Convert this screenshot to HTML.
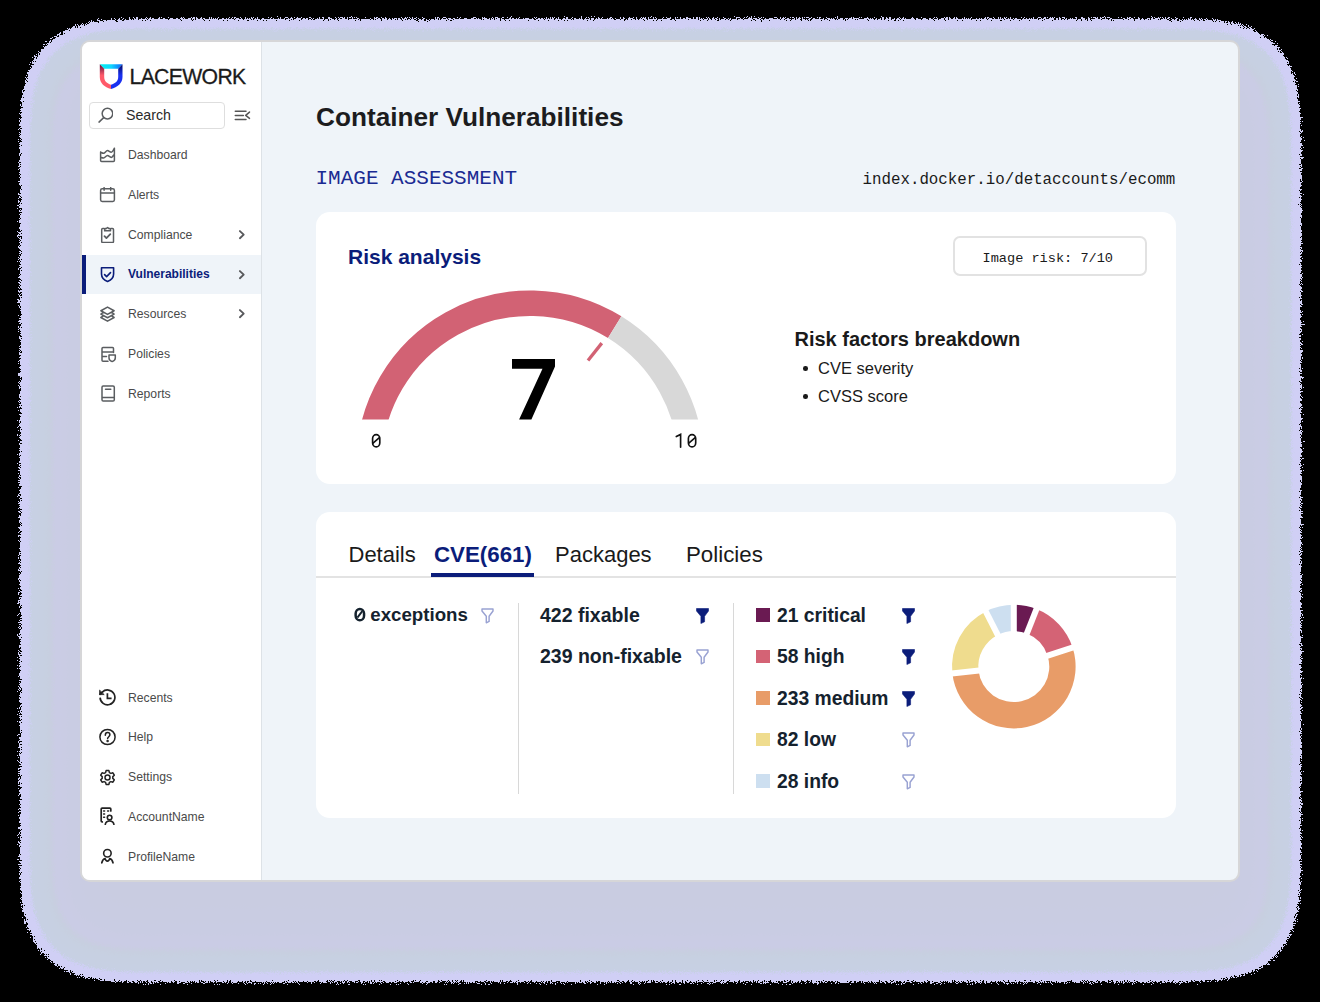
<!DOCTYPE html>
<html><head><meta charset="utf-8">
<style>
*{margin:0;padding:0;box-sizing:border-box}
html,body{width:1320px;height:1002px;overflow:hidden;background:#000;font-family:"Liberation Sans",sans-serif;-webkit-font-smoothing:antialiased}
div,span,svg{position:absolute}
#glow{left:18px;top:18px;width:1284px;height:964px;border-radius:78px;background:#c8c9de;box-shadow:inset 0 0 18px 8px #d3d0f6}
#win{left:80px;top:40px;width:1160px;height:842px;border:2px solid #d6d6d8;border-radius:10px;background:#eff4f9;overflow:hidden}
#side{left:82px;top:42px;width:180px;height:838px;background:#fff;border-right:1px solid #dde2e7;border-bottom-left-radius:8px;border-top-left-radius:8px}
.t{white-space:pre;line-height:1}
.nt{left:128px;font-size:12.2px;color:#4a4a4a;white-space:pre;line-height:40px;height:40px}
.ic{left:99px;fill:none;stroke:#5a5d60;stroke-width:1.5;stroke-linecap:round;stroke-linejoin:round}
.ic2{left:99px;fill:none;stroke:#222;stroke-width:1.5;stroke-linecap:round;stroke-linejoin:round}
.chev{left:237px;fill:none;stroke:#58595c;stroke-width:1.9;stroke-linecap:round;stroke-linejoin:round}
.mono{font-family:"Liberation Mono",monospace}
.card{left:316px;width:860px;background:#fff;border-radius:14px}
</style></head><body>
<svg id="glowsvg" style="left:0;top:0" width="1320" height="1002" viewBox="0 0 1320 1002">
<filter id="gf" filterUnits="userSpaceOnUse" x="0" y="0" width="1320" height="1002" color-interpolation-filters="sRGB">
<feGaussianBlur in="SourceGraphic" stdDeviation="40" result="b"/>
<feTurbulence type="fractalNoise" baseFrequency="1.7" numOctaves="1" seed="7" result="n"/>
<feComposite in="b" in2="n" operator="arithmetic" k1="0" k2="1" k3="0.09" k4="-0.045"/>
<feColorMatrix type="matrix" values="0 0 0 1 0  0 0 0 1 0  0 0 0 1 0  0 0 0 1 0"/>
<feComponentTransfer><feFuncR type="table" tableValues="0.8157 0.8157 0.8157 0.8157 0.8157 0.8157 0.8157 0.8157 0.8157 0.8157 0.8157 0.8157 0.8157 0.8157 0.8157 0.8157 0.8157 0.8157 0.8157 0.8157 0.8157 0.8157 0.8157 0.8157 0.8157 0.8157 0.8157 0.8157 0.8157 0.8157 0.8157 0.8157 0.8157 0.8157 0.8157 0.8157 0.8157 0.8157 0.8157 0.8157 0.8157 0.8157 0.8157 0.8157 0.8157 0.8157 0.8157 0.8157 0.8157 0.8157 0.8157 0.8157 0.8157 0.8157 0.8157 0.8157 0.8157 0.8157 0.8157 0.8157 0.8157 0.8157 0.8157 0.8157 0.8157 0.8157 0.8157 0.8157 0.8157 0.8157 0.8098 0.8039 0.7980 0.7922 0.7863 0.7804 0.7804 0.7804 0.7804 0.7804 0.7804 0.7804 0.7804 0.7804 0.7804 0.7804 0.7804 0.7804 0.7804 0.7804 0.7804 0.7804 0.7804 0.7804 0.7804 0.7804 0.7804 0.7804 0.7804 0.7804 0.7804 0.7807 0.7810 0.7814 0.7817 0.7820 0.7824 0.7827 0.7830 0.7833 0.7837 0.7840 0.7843 0.7853 0.7863 0.7873 0.7882 0.7892 0.7902 0.7912 0.7922 0.7931 0.7941 0.7951 0.7961 0.7959 0.7957 0.7955 0.7953 0.7951 0.7949 0.7947 0.7945 0.7943 0.7941 0.7939 0.7937 0.7935 0.7933 0.7931 0.7929 0.7927 0.7925 0.7924 0.7922 0.7921 0.7920 0.7919 0.7919 0.7918 0.7917 0.7917 0.7916 0.7915 0.7915 0.7914 0.7913 0.7912 0.7912 0.7911 0.7910 0.7910 0.7909 0.7908 0.7908 0.7907 0.7906 0.7905 0.7905 0.7904 0.7903 0.7903 0.7902 0.7901 0.7901 0.7900 0.7899 0.7898 0.7898 0.7897 0.7896 0.7896 0.7895 0.7894 0.7894 0.7893 0.7892 0.7891 0.7891 0.7890 0.7889 0.7889 0.7888 0.7887 0.7887 0.7886 0.7885 0.7884 0.7884 0.7883 0.7882"/><feFuncG type="table" tableValues="0.8118 0.8118 0.8118 0.8118 0.8118 0.8118 0.8118 0.8118 0.8118 0.8118 0.8118 0.8118 0.8118 0.8118 0.8118 0.8118 0.8118 0.8118 0.8118 0.8118 0.8118 0.8118 0.8118 0.8118 0.8118 0.8118 0.8118 0.8118 0.8118 0.8118 0.8118 0.8118 0.8118 0.8118 0.8118 0.8118 0.8118 0.8118 0.8118 0.8118 0.8118 0.8118 0.8118 0.8118 0.8118 0.8118 0.8118 0.8118 0.8118 0.8118 0.8118 0.8118 0.8118 0.8118 0.8118 0.8118 0.8118 0.8118 0.8118 0.8118 0.8118 0.8118 0.8118 0.8118 0.8118 0.8118 0.8118 0.8118 0.8118 0.8118 0.8131 0.8144 0.8157 0.8170 0.8183 0.8196 0.8196 0.8196 0.8196 0.8196 0.8196 0.8196 0.8196 0.8196 0.8196 0.8196 0.8196 0.8196 0.8196 0.8196 0.8196 0.8196 0.8196 0.8196 0.8196 0.8196 0.8196 0.8196 0.8196 0.8196 0.8196 0.8190 0.8183 0.8176 0.8170 0.8163 0.8157 0.8150 0.8144 0.8137 0.8131 0.8124 0.8118 0.8108 0.8098 0.8088 0.8078 0.8069 0.8059 0.8049 0.8039 0.8029 0.8020 0.8010 0.8000 0.8000 0.8000 0.8000 0.8000 0.8000 0.8000 0.8000 0.8000 0.8000 0.8000 0.8000 0.8000 0.8000 0.8000 0.8000 0.8000 0.8000 0.8000 0.8000 0.8000 0.8000 0.8000 0.8000 0.8000 0.8000 0.8000 0.8000 0.8000 0.8000 0.8000 0.8000 0.8000 0.8000 0.8000 0.8000 0.8000 0.8000 0.8000 0.8000 0.8000 0.8000 0.8000 0.8000 0.8000 0.8000 0.8000 0.8000 0.8000 0.8000 0.8000 0.8000 0.8000 0.8000 0.8000 0.8000 0.8000 0.8000 0.8000 0.8000 0.8000 0.8000 0.8000 0.8000 0.8000 0.8000 0.8000 0.8000 0.8000 0.8000 0.8000 0.8000 0.8000 0.8000 0.8000 0.8000 0.8000"/><feFuncB type="table" tableValues="0.9647 0.9647 0.9647 0.9647 0.9647 0.9647 0.9647 0.9647 0.9647 0.9647 0.9647 0.9647 0.9647 0.9647 0.9647 0.9647 0.9647 0.9647 0.9647 0.9647 0.9647 0.9647 0.9647 0.9647 0.9647 0.9647 0.9647 0.9647 0.9647 0.9647 0.9647 0.9647 0.9647 0.9647 0.9647 0.9647 0.9647 0.9647 0.9647 0.9647 0.9647 0.9647 0.9647 0.9647 0.9647 0.9647 0.9647 0.9647 0.9647 0.9647 0.9647 0.9647 0.9647 0.9647 0.9647 0.9647 0.9647 0.9647 0.9647 0.9647 0.9647 0.9647 0.9647 0.9647 0.9647 0.9647 0.9647 0.9647 0.9647 0.9647 0.9529 0.9412 0.9294 0.9176 0.9059 0.8941 0.8938 0.8935 0.8932 0.8929 0.8925 0.8922 0.8919 0.8916 0.8913 0.8910 0.8907 0.8904 0.8900 0.8897 0.8894 0.8891 0.8888 0.8885 0.8882 0.8878 0.8875 0.8872 0.8869 0.8866 0.8863 0.8856 0.8850 0.8843 0.8837 0.8830 0.8824 0.8817 0.8810 0.8804 0.8797 0.8791 0.8784 0.8804 0.8824 0.8843 0.8863 0.8882 0.8902 0.8922 0.8941 0.8961 0.8980 0.9000 0.9020 0.9016 0.9012 0.9008 0.9004 0.9000 0.8996 0.8992 0.8988 0.8984 0.8980 0.8976 0.8973 0.8969 0.8965 0.8961 0.8957 0.8953 0.8949 0.8945 0.8941 0.8939 0.8937 0.8935 0.8933 0.8931 0.8929 0.8926 0.8924 0.8922 0.8920 0.8918 0.8916 0.8914 0.8912 0.8910 0.8908 0.8905 0.8903 0.8901 0.8899 0.8897 0.8895 0.8893 0.8891 0.8889 0.8887 0.8884 0.8882 0.8880 0.8878 0.8876 0.8874 0.8872 0.8870 0.8868 0.8866 0.8863 0.8861 0.8859 0.8857 0.8855 0.8853 0.8851 0.8849 0.8847 0.8845 0.8842 0.8840 0.8838 0.8836 0.8834 0.8832 0.8830 0.8828 0.8826 0.8824"/><feFuncA type="discrete" tableValues="0 0 0 0 0 0 0 0 0 0 0 0 0 0 0 0 0 0 0 0 0 0 0 0 0 0 0 1 1 1 1 1 1 1 1 1 1 1 1 1 1 1 1 1 1 1 1 1 1 1 1 1 1 1 1 1 1 1 1 1 1 1 1 1 1 1 1 1 1 1 1 1 1 1 1 1 1 1 1 1 1 1 1 1 1 1 1 1 1 1 1 1 1 1 1 1 1 1 1 1"/></feComponentTransfer>
</filter>
<rect x="44" y="43" width="1233" height="915" fill="#fff" filter="url(#gf)"/>
</svg>
<div id="win"></div>
<div id="side"></div>

<!-- logo -->
<svg style="left:99px;top:63px" width="25" height="27" viewBox="0 0 25 27">
  <defs>
    <linearGradient id="lgTop" x1="0" x2="1" y1="0" y2="0"><stop offset="0" stop-color="#00f0f0"/><stop offset="0.5" stop-color="#10d8ff"/><stop offset="1" stop-color="#1060ff"/></linearGradient>
    <linearGradient id="lgL" x1="0" x2="0" y1="0" y2="1"><stop offset="0" stop-color="#5a1040"/><stop offset="0.45" stop-color="#ff5a6a"/><stop offset="1" stop-color="#ff5a6a"/></linearGradient>
    <linearGradient id="lgR" x1="0" x2="0" y1="0" y2="1"><stop offset="0" stop-color="#000a60"/><stop offset="0.45" stop-color="#1a30f0"/><stop offset="1" stop-color="#1a30f0"/></linearGradient>
  </defs>
  <path d="M0.8 1.2 L23.5 1.2 L19.2 5.8 L5.2 5.8 Z" fill="url(#lgTop)"/>
  <path d="M0.8 1.2 L5.2 5.8 L5.2 14 C5.2 18 8 20.5 12 21.8 L12 25.9 C5.5 24.5 0.8 20 0.8 14 Z" fill="url(#lgL)"/>
  <path d="M23.5 1.2 L19.2 5.8 L19.2 14 C19.2 18 16.2 20.5 12 21.8 L12 25.9 C18.5 24.5 23.5 20 23.5 14 Z" fill="url(#lgR)"/>
</svg>
<span class="t" style="left:129.5px;top:66.1px;font-size:21.2px;color:#1b1b1b;letter-spacing:-0.65px;-webkit-text-stroke:0.3px #1b1b1b">LACEWORK</span>

<!-- search -->
<div style="left:88.7px;top:102px;width:136.3px;height:27px;border:1px solid #dedede;border-radius:4px;background:#fff"></div>
<svg class="ic" style="left:97px;top:106px" width="16" height="18" viewBox="0 0 16 18"><circle cx="10.45" cy="7.6" r="5.3"/><path d="M6.4 11.9 L2 16.1"/></svg>
<span class="t" style="left:126px;top:107.5px;font-size:14.2px;color:#2a2a2a">Search</span>
<svg class="ic" style="left:233px;top:108px;stroke:#555" width="20" height="14" viewBox="0 0 20 14"><path d="M2.3 3.2 H13 M2.3 7.4 H10.4 M2.3 11.6 H13 M16.5 4.1 L12.7 7.4 L16.5 10.4"/></svg>

<!-- nav -->
<svg class="ic" style="top:147px;stroke:#5a5d60;stroke-width:1.5" width="17" height="17" viewBox="0 0 17 17"><path d="M1.6 5.1 V13.6 Q1.6 14.6 2.6 14.6 H14.4 Q15.4 14.6 15.4 13.6 V1.2 M1.6 5.1 C2.6 5.6 3.5 6.3 4.6 6.3 C6 6.3 7 3.6 8.5 3.6 C9.8 3.6 10.8 5.3 12.3 5.3 C13.5 5.3 14.6 2.5 15.4 1.2 M1.6 10.3 C2.6 10.6 3.5 11 4.6 11 C6 11 7 8.5 8.5 8.5 C9.8 8.5 10.8 10.4 12.2 10.4 C13.4 10.4 14.5 8 15.4 7.3"/></svg>
<span class="nt" style="top:135px">Dashboard</span>

<svg class="ic" style="top:187px" width="17" height="17" viewBox="0 0 17 17"><rect x="1.6" y="1.8" width="13.8" height="12.6" rx="1.6"/><path d="M1.6 6.1 H15.4 M5.1 0.6 V3.2 M11.7 0.6 V3.2"/></svg>
<span class="nt" style="top:175px">Alerts</span>

<svg class="ic" style="top:226px" width="17" height="17" viewBox="0 0 17 17"><path d="M5 2.6 H3.7 Q2.7 2.6 2.7 3.6 V15.6 Q2.7 16.6 3.7 16.6 H13.5 Q14.5 16.6 14.5 15.6 V3.6 Q14.5 2.6 13.5 2.6 H12.2 M5.6 4.8 H11.6 L11.2 2.6 H9.7 Q8.6 0.4 7.5 2.6 H6 Z"/><path d="M5.5 10.2 L7.4 12.1 L11.3 8.2" stroke-width="1.8"/></svg>
<span class="nt" style="top:214.7px">Compliance</span>
<svg class="chev" style="top:229px" width="10" height="12" viewBox="0 0 10 12"><path d="M2.9 2.1 L6.7 5.6 L2.9 9.2"/></svg>

<div style="left:82px;top:254.5px;width:179px;height:39.5px;background:#eff4f9"></div>
<div style="left:82px;top:254.5px;width:4px;height:39.5px;background:#0b1d7a"></div>
<svg class="ic" style="top:266px;stroke:#0b1d7a;stroke-width:1.6" width="17" height="17" viewBox="0 0 17 17"><path d="M2.5 1.8 H14.6 V8 C14.6 12 11.5 14.3 8.55 15.5 C5.6 14.3 2.5 12 2.5 8 Z M5.6 8.6 L7.6 10.6 L11.5 6.6"/></svg>
<span class="nt" style="top:254.2px;color:#0b1d7a;font-weight:bold;font-size:12px">Vulnerabilities</span>
<svg class="chev" style="top:268.5px" width="10" height="12" viewBox="0 0 10 12"><path d="M2.9 2.1 L6.7 5.6 L2.9 9.2"/></svg>

<svg class="ic" style="top:305.5px;stroke-width:1.55" width="17" height="17" viewBox="0 0 17 17"><path d="M8.5 1.1 L15.1 4.7 L8.5 8.4 L1.9 4.7 Z M3.6 6.9 L1.9 8.1 L8.5 11.7 L15.1 8.1 L13.4 6.9 M3.6 10.3 L1.9 11.5 L8.5 15.1 L15.1 11.5 L13.4 10.3"/></svg>
<span class="nt" style="top:293.8px">Resources</span>
<svg class="chev" style="top:308px" width="10" height="12" viewBox="0 0 10 12"><path d="M2.9 2.1 L6.7 5.6 L2.9 9.2"/></svg>

<svg class="ic" style="top:345.5px;left:99.6px" width="17" height="17" viewBox="0 0 17 17"><path d="M8 15.2 H3 Q2 15.2 2 14.2 V2.5 Q2 1.5 3 1.5 H12.5 Q13.5 1.5 13.5 2.5 V6.5 M2 6 H13.5 M2 10.5 H6.5 M9 9 H15.3 V12 C15.3 13.8 13.8 15 12.15 15.6 C10.5 15 9 13.8 9 12 Z"/></svg>
<span class="nt" style="top:333.7px">Policies</span>

<svg class="ic" style="top:385px;left:99.6px" width="17" height="17" viewBox="0 0 17 17"><path d="M3.2 1 H13 Q14.3 1 14.3 2.3 V14.7 Q14.3 16 13 16 H3.2 Q2 16 2 14.7 V2.3 Q2 1 3.2 1 Z M2 12.5 H14.3 M5.5 4.3 H10.8"/></svg>
<span class="nt" style="top:373.5px">Reports</span>

<!-- bottom nav -->
<svg class="ic2" style="top:688px" width="18" height="18" viewBox="0 0 18 18"><path d="M1.1 9.6 A7.4 7.4 0 1 0 3.3 4.1" stroke-width="1.7" stroke-linecap="butt"/><path d="M0.6 2.5 L0.6 6.6 L4.8 6.6 Z" fill="#222" stroke-width="0.8"/><path d="M0.9 6.3 L3.3 4.1" stroke-width="1.7"/><path d="M8.4 5.3 V10.3 H12.6" stroke-width="1.7" stroke-linecap="butt" stroke-linejoin="miter"/></svg>
<span class="nt" style="top:677.5px">Recents</span>

<svg class="ic2" style="top:728px" width="18" height="18" viewBox="0 0 18 18"><circle cx="8.5" cy="9" r="7.6"/><path d="M6.3 7.2 C6.3 5.4 7.5 4.6 8.6 4.6 C9.9 4.6 10.9 5.5 10.9 6.8 C10.9 8.6 8.6 8.8 8.6 10.6"/><circle cx="8.6" cy="13.1" r="0.5" fill="#222"/></svg>
<span class="nt" style="top:717px">Help</span>

<svg class="ic2" style="top:768.5px" width="18" height="18" viewBox="0 0 18 18"><path d="M7.1 1.6 H9.9 L10.4 3.6 L11.9 4.4 L13.9 3.8 L15.3 6.2 L13.8 7.6 V9.4 L15.3 10.8 L13.9 13.2 L11.9 12.6 L10.4 13.4 L9.9 15.4 H7.1 L6.6 13.4 L5.1 12.6 L3.1 13.2 L1.7 10.8 L3.2 9.4 V7.6 L1.7 6.2 L3.1 3.8 L5.1 4.4 L6.6 3.6 Z"/><circle cx="8.5" cy="8.5" r="2.5"/></svg>
<span class="nt" style="top:757px">Settings</span>

<svg class="ic2" style="top:806px" width="18" height="19" viewBox="0 0 18 19"><path d="M3.3 15.9 H3.1 Q2.2 15.9 2.2 15 V3 Q2.2 2.2 3.1 2.2 H10.9 Q11.8 2.2 11.8 3 V5" stroke-width="1.7"/><path d="M4.6 4.9 H5.6 M8.6 4.9 H9.6 M4.6 8.1 H5.6 M4.6 11.3 H5.6" stroke-width="1.5"/><circle cx="10.6" cy="11.6" r="2.3" stroke-width="1.6"/><path d="M6.3 18.3 C6.7 16.1 8.3 15 10.6 15 C12.9 15 14.5 16.1 14.9 18.3" stroke-width="1.7"/></svg>
<span class="nt" style="top:796.8px">AccountName</span>

<svg class="ic2" style="top:846px" width="18" height="19" viewBox="0 0 18 19"><circle cx="8.4" cy="7.2" r="3.75" stroke-width="1.6"/><path d="M2.8 16.8 C3.4 14.2 4.6 12.8 6 12.6 C6.6 14.6 7.5 15.1 8.4 15.1 C9.3 15.1 10.2 14.6 10.8 12.6 C12.2 12.8 13.4 14.2 14 16.8" stroke-width="1.7"/></svg>
<span class="nt" style="top:836.6px">ProfileName</span>


<!-- main header -->
<span class="t" style="left:316px;top:104px;font-size:26.2px;font-weight:bold;color:#1c1c1e">Container Vulnerabilities</span>
<span class="t mono" style="left:315.5px;top:168px;font-size:21px;color:#1a2a92">IMAGE ASSESSMENT</span>
<span class="t mono" style="left:862.5px;top:173px;font-size:15.8px;color:#1a1a1a">index.docker.io/detaccounts/ecomm</span>

<!-- card 1 -->
<div class="card" style="top:212px;height:271.5px"></div>
<span class="t" style="left:348px;top:246px;font-size:21px;font-weight:bold;color:#0b1d7a">Risk analysis</span>
<div style="left:952.5px;top:236px;width:194px;height:39.5px;border:2px solid #e2e2e2;border-radius:7px"></div>
<span class="t mono" style="left:982.5px;top:252px;font-size:13.6px;color:#1a1a1a">Image risk: 7/10</span>

<svg style="left:316px;top:212px" width="420" height="260" viewBox="316 212 420 260">
  <defs><clipPath id="gclip"><rect x="316" y="212" width="420" height="207.5"/></clipPath></defs>
  <g clip-path="url(#gclip)" fill="none" stroke-width="25.5">
    <path d="M 369.1 464.2 A 161 161 0 0 1 614.7 327.2" stroke="#d26274"/>
    <path d="M 614.7 327.2 A 161 161 0 0 1 691.1 464.2" stroke="#d8d8d8"/>
  </g>
  <line x1="588" y1="360.5" x2="601.8" y2="343.1" stroke="#d26274" stroke-width="3.3"/>
</svg>
<svg style="left:500px;top:350px" width="70" height="75" viewBox="500 350 70 75"><polygon points="512,359.1 555,359.1 555,366.4 531.4,419.6 519.1,419.6 542.5,368.8 512,368.8" fill="#000"/></svg>
<svg style="left:360px;top:425px" width="350" height="30" viewBox="360 425 350 30" fill="none" stroke="#111" stroke-width="1.65" stroke-linecap="round"><rect x="372.6" y="434.6" width="7.2" height="12.3" rx="3.6" ry="3.9"/><path d="M373 443.2 L379.4 437.7"/><rect x="688.4" y="434.6" width="7.3" height="12.3" rx="3.6" ry="3.9"/><path d="M688.8 443.2 L695.2 437.7"/><path d="M676.3 436.6 L680.6 434.4 V447.2"/></svg>


<span class="t" style="left:794.5px;top:328.5px;font-size:20px;font-weight:bold;color:#1a1a1a">Risk factors breakdown</span>
<div style="left:803.3px;top:366.3px;width:4.6px;height:4.6px;border-radius:50%;background:#1a1a1a"></div>
<span class="t" style="left:818px;top:360px;font-size:16.5px;color:#1a1a1a">CVE severity</span>
<div style="left:803.3px;top:394.3px;width:4.6px;height:4.6px;border-radius:50%;background:#1a1a1a"></div>
<span class="t" style="left:818px;top:388px;font-size:16.5px;color:#1a1a1a">CVSS score</span>

<!-- card 2 -->
<div class="card" style="top:512px;height:306px"></div>
<span class="t" style="left:348.5px;top:544px;font-size:22px;color:#1a1a1a">Details</span>
<span class="t" style="left:434px;top:544px;font-size:22.3px;font-weight:bold;color:#0b1d7a">CVE(661)</span>
<span class="t" style="left:555px;top:544px;font-size:22px;color:#1a1a1a">Packages</span>
<span class="t" style="left:686px;top:544px;font-size:22.3px;color:#1a1a1a">Policies</span>
<div style="left:316px;top:576px;width:860px;height:1.5px;background:#e3e3e3"></div>
<div style="left:430.5px;top:573px;width:103px;height:4px;background:#0b1d7a"></div>

<svg style="left:352px;top:605px" width="16" height="19" viewBox="0 0 16 19" fill="none" stroke="#15222e" stroke-width="2.5"><rect x="3.65" y="3.95" width="8.4" height="11.3" rx="4.2" ry="4.6"/><path d="M5.4 12.6 L10.3 6.2" stroke-width="1.9"/></svg><span class="t" style="left:370.3px;top:606px;font-size:18.7px;font-weight:bold;color:#15222e">exceptions</span>
<div style="left:518px;top:602.5px;width:1.3px;height:191px;background:#d8d8d8"></div>
<div style="left:732.5px;top:602.5px;width:1.3px;height:191px;background:#d8d8d8"></div>
<span class="t" style="left:540px;top:606px;font-size:19.5px;font-weight:bold;color:#15222e">422 fixable</span>
<span class="t" style="left:540px;top:647.3px;font-size:19.5px;font-weight:bold;color:#15222e">239 non-fixable</span>
<div style="left:756.4px;top:608.2px;width:13.6px;height:13.6px;background:#6a1a52"></div><span class="t" style="left:777px;top:605.5px;font-size:19.3px;font-weight:bold;color:#15222e">21 critical</span><svg style="left:902.3px;top:607.5px" width="13" height="16" viewBox="0 0 13 16"><path d="M0.5 0.5 H12.5 V3 L8.6 8.3 V13.8 L4.9 15.5 V8.3 L0.5 3 Z" fill="#0b1d7a" stroke="#0b1d7a" stroke-width="0.6" stroke-linejoin="round"/></svg><div style="left:756.4px;top:649.7px;width:13.6px;height:13.6px;background:#d46375"></div><span class="t" style="left:777px;top:647.0px;font-size:19.3px;font-weight:bold;color:#15222e">58 high</span><svg style="left:902.3px;top:649.0px" width="13" height="16" viewBox="0 0 13 16"><path d="M0.5 0.5 H12.5 V3 L8.6 8.3 V13.8 L4.9 15.5 V8.3 L0.5 3 Z" fill="#0b1d7a" stroke="#0b1d7a" stroke-width="0.6" stroke-linejoin="round"/></svg><div style="left:756.4px;top:691.2px;width:13.6px;height:13.6px;background:#e89c68"></div><span class="t" style="left:777px;top:688.5px;font-size:19.3px;font-weight:bold;color:#15222e">233 medium</span><svg style="left:902.3px;top:690.5px" width="13" height="16" viewBox="0 0 13 16"><path d="M0.5 0.5 H12.5 V3 L8.6 8.3 V13.8 L4.9 15.5 V8.3 L0.5 3 Z" fill="#0b1d7a" stroke="#0b1d7a" stroke-width="0.6" stroke-linejoin="round"/></svg><div style="left:756.4px;top:732.7px;width:13.6px;height:13.6px;background:#efdc8e"></div><span class="t" style="left:777px;top:730.0px;font-size:19.3px;font-weight:bold;color:#15222e">82 low</span><svg style="left:902.3px;top:732.0px" width="13" height="16" viewBox="0 0 13 16"><path d="M1 1 H12 V3 L8.1 8.2 V13.4 L5.3 14.8 V8.2 L1 3 Z" fill="none" stroke="#99a2d2" stroke-width="1.45" stroke-linejoin="round"/></svg><div style="left:756.4px;top:774.2px;width:13.6px;height:13.6px;background:#cddff0"></div><span class="t" style="left:777px;top:771.5px;font-size:19.3px;font-weight:bold;color:#15222e">28 info</span><svg style="left:902.3px;top:773.5px" width="13" height="16" viewBox="0 0 13 16"><path d="M1 1 H12 V3 L8.1 8.2 V13.4 L5.3 14.8 V8.2 L1 3 Z" fill="none" stroke="#99a2d2" stroke-width="1.45" stroke-linejoin="round"/></svg><svg style="left:481px;top:607.5px" width="13" height="16" viewBox="0 0 13 16"><path d="M1 1 H12 V3 L8.1 8.2 V13.4 L5.3 14.8 V8.2 L1 3 Z" fill="none" stroke="#99a2d2" stroke-width="1.45" stroke-linejoin="round"/></svg><svg style="left:696px;top:607.5px" width="13" height="16" viewBox="0 0 13 16"><path d="M0.5 0.5 H12.5 V3 L8.6 8.3 V13.8 L4.9 15.5 V8.3 L0.5 3 Z" fill="#0b1d7a" stroke="#0b1d7a" stroke-width="0.6" stroke-linejoin="round"/></svg><svg style="left:696px;top:649px" width="13" height="16" viewBox="0 0 13 16"><path d="M1 1 H12 V3 L8.1 8.2 V13.4 L5.3 14.8 V8.2 L1 3 Z" fill="none" stroke="#99a2d2" stroke-width="1.45" stroke-linejoin="round"/></svg><svg style="left:940px;top:595px" width="150" height="145" viewBox="940 595 150 145"><path d="M1013.80 604.80 A61.8 61.8 0 0 1 1036.45 609.10 L1026.81 633.57 A35.5 35.5 0 0 0 1013.80 631.10 Z" fill="#6a1a52"/><path d="M1036.45 609.10 A61.8 61.8 0 0 1 1072.58 647.50 L1047.56 655.63 A35.5 35.5 0 0 0 1026.81 633.57 Z" fill="#d46375"/><path d="M1072.58 647.50 A61.8 61.8 0 1 1 952.39 673.49 L978.52 670.56 A35.5 35.5 0 1 0 1047.56 655.63 Z" fill="#e89c68"/><path d="M952.39 673.49 A61.8 61.8 0 0 1 985.84 611.49 L997.74 634.94 A35.5 35.5 0 0 0 978.52 670.56 Z" fill="#efdc8e"/><path d="M985.84 611.49 A61.8 61.8 0 0 1 1013.80 604.80 L1013.80 631.10 A35.5 35.5 0 0 0 997.74 634.94 Z" fill="#cddff0"/><line x1="1013.80" y1="634.10" x2="1013.80" y2="601.80" stroke="#fff" stroke-width="6"/><line x1="1025.71" y1="636.36" x2="1037.55" y2="606.31" stroke="#fff" stroke-width="6"/><line x1="1044.71" y1="656.56" x2="1075.43" y2="646.58" stroke="#fff" stroke-width="6"/><line x1="981.50" y1="670.22" x2="949.40" y2="673.82" stroke="#fff" stroke-width="6"/><line x1="999.10" y1="637.62" x2="984.48" y2="608.81" stroke="#fff" stroke-width="6"/></svg>
</body></html>
